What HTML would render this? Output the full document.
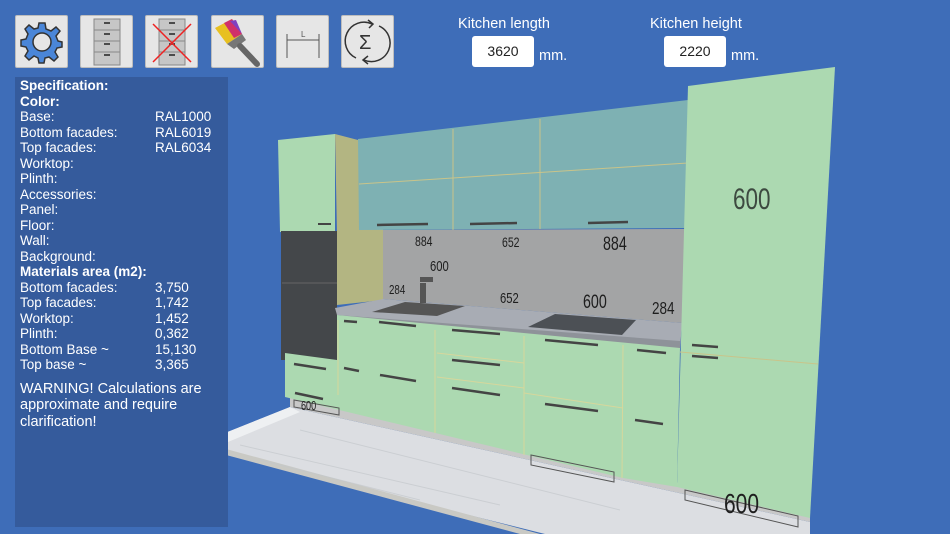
<!DOCTYPE html>
<html><head><meta charset="utf-8"><style>
body{margin:0;width:950px;height:534px;overflow:hidden;background:#3e6db8;font-family:"Liberation Sans",sans-serif;position:relative}
.btn{position:absolute;top:15px;width:53px;height:53px;background:#e6e6e6;border:1px solid #bdbdbd;border-radius:2px;box-sizing:border-box}
.panel{position:absolute;left:15px;top:77px;width:213px;height:450px;background:#355b9c;color:#fff;font-size:13.5px;line-height:15.5px;padding:1px 5px;box-sizing:border-box}
.r{display:flex}.r span:first-child{width:135px}
b{font-weight:bold}
.lbl{position:absolute;color:#fff;font-size:14.5px}
.inp{position:absolute;top:36px;width:62px;height:31px;background:#fff;border-radius:3px;font-size:14px;text-align:center;line-height:31px;color:#222}
</style></head><body>
<svg width="950" height="534" style="position:absolute;left:0;top:0">
<polygon points="215,437 290,407 810,522 810,534 545,534 215,452" fill="#dcdee2"/>
<polygon points="215,437 290,407 300,412 228,442" fill="#eef0f2"/>
<polygon points="215,446 540,534 520,534 215,452" fill="#c9c9c4"/>
<polygon points="290,397 810,512 810,522 290,407" fill="#c8c8c8"/>
<g stroke="#c4c8cc" stroke-width="1" opacity="0.7"><line x1="240" y1="445" x2="500" y2="505"/><line x1="300" y1="430" x2="620" y2="510"/><line x1="260" y1="460" x2="420" y2="500"/></g>
<polygon points="278,140 335,134 335,232 280,232" fill="#acd9b1"/>
<polygon points="335,134 358,140 383,230 383,300 337,305 337,232" fill="#b3b582"/>
<rect x="281" y="231" width="56" height="129" fill="#44474a"/>
<line x1="282" y1="283" x2="337" y2="283" stroke="#666" />
<line x1="318" y1="224" x2="331" y2="224" stroke="#444" stroke-width="2"/>
<polygon points="358,139 688,100 685,228 359,230" fill="#7eb1b3"/>
<polyline points="359,184 688,163" stroke="#c9c48a" fill="none"/>
<line x1="453" y1="129" x2="453" y2="230" stroke="#c9c48a"/>
<line x1="540" y1="119" x2="540" y2="229" stroke="#c9c48a"/>
<g stroke="#444" stroke-width="2.5"><line x1="377" y1="225" x2="428" y2="224"/><line x1="470" y1="224" x2="517" y2="223"/><line x1="588" y1="223" x2="628" y2="222"/></g>
<polygon points="383,230 685,229 682,323 383,299" fill="#a3a4a5"/>
<polygon points="335,308 383,299 682,323 680,349 337,315" fill="#a8acb4"/>
<polygon points="337,315 680,341 680,349 337,320" fill="#8e9299"/>
<polygon points="372,312 405,302 465,306 437,316" fill="#555"/>
<polygon points="528,327 555,314 636,320 622,335" fill="#4c5055"/>
<rect x="420" y="283" width="6" height="20" fill="#555"/><rect x="420" y="277" width="13" height="5" fill="#555"/>
<polygon points="337,315 680,348 677,487 623,478 285,397 285,353 337,360" fill="#acd9b1"/>
<g stroke="#d6d79c" stroke-width="1"><line x1="435" y1="330" x2="435" y2="433"/><line x1="524" y1="336" x2="524" y2="455"/><line x1="623" y1="345" x2="622" y2="478"/><line x1="338" y1="320" x2="338" y2="395"/><line x1="437" y1="353" x2="524" y2="363"/><line x1="437" y1="377" x2="524" y2="388"/><line x1="524" y1="393" x2="623" y2="408"/></g>
<g stroke="#444" stroke-width="2.5">
<line x1="344" y1="321" x2="357" y2="322"/><line x1="379" y1="322" x2="416" y2="326"/><line x1="452" y1="330" x2="500" y2="334"/><line x1="545" y1="340" x2="598" y2="345"/><line x1="637" y1="350" x2="666" y2="353"/>
<line x1="295" y1="393" x2="323" y2="399"/><line x1="344" y1="368" x2="359" y2="371"/><line x1="380" y1="375" x2="416" y2="381"/><line x1="452" y1="360" x2="500" y2="365"/><line x1="452" y1="388" x2="500" y2="395"/><line x1="545" y1="404" x2="598" y2="411"/><line x1="635" y1="420" x2="663" y2="424"/><line x1="294" y1="364" x2="326" y2="369"/>
</g>
<g fill="none" stroke="#555"><polygon points="294,400 339,408 339,415 294,407"/><polygon points="531,455 614,472 614,482 531,465"/><polygon points="685,490 798,516 798,527 685,500"/></g>
<polygon points="688,86 835,67 810,518 677,487" fill="#acd9b1"/>
<line x1="680" y1="352" x2="818" y2="364" stroke="#c9c48a"/>
<g stroke="#444" stroke-width="2.5"><line x1="692" y1="345" x2="718" y2="347"/><line x1="692" y1="356" x2="718" y2="358"/></g>
<g font-family="Liberation Sans" fill="#1e1e1e">
<text transform="translate(733,209) scale(0.75,1)" font-size="30" fill="#3d4a40">600</text>
<text transform="translate(415,246) scale(0.75,1)" font-size="14">884</text>
<text transform="translate(502,247) scale(0.75,1)" font-size="14">652</text>
<text transform="translate(603,250) scale(0.75,1)" font-size="19">884</text>
<text transform="translate(430,271) scale(0.75,1)" font-size="15">600</text>
<text transform="translate(389,294) scale(0.75,1)" font-size="13">284</text>
<text transform="translate(500,303) scale(0.75,1)" font-size="15">652</text>
<text transform="translate(583,308) scale(0.75,1)" font-size="19">600</text>
<text transform="translate(652,314) scale(0.75,1)" font-size="18">284</text>
<text transform="translate(301,410) scale(0.7,1)" font-size="13">600</text>
<text transform="translate(724,513) scale(0.75,1)" font-size="28">600</text>
</g>
</svg>
<div class="btn" style="left:15px"><svg width="51" height="51" viewBox="0 0 51 51"><g transform="translate(26,26)" fill="#4a86d8" stroke="#333" stroke-width="1.5"><path d="M-3,-19 L3,-19 L4,-13 L9,-11 L14,-15 L18,-11 L14,-6 L16,-1 L20,0 L20,5 L15,6 L13,10 L16,15 L12,19 L7,15 L3,16 L2,21 L-3,21 L-4,16 L-8,14 L-13,18 L-17,14 L-14,9 L-16,5 L-21,4 L-21,-2 L-16,-3 L-14,-8 L-17,-13 L-13,-17 L-8,-13 L-4,-14 Z"/><circle r="9" fill="#e6e6e6"/></g></svg></div>
<div class="btn" style="left:80px"><svg width="51" height="51"><rect x="13" y="3" width="26" height="46" fill="#c6c6c6" stroke="#888"/><g stroke="#888"><line x1="13" y1="14" x2="39" y2="14"/><line x1="13" y1="25" x2="39" y2="25"/><line x1="13" y1="36" x2="39" y2="36"/></g><g stroke="#222" stroke-width="1.5"><line x1="23" y1="7" x2="29" y2="7"/><line x1="23" y1="18" x2="29" y2="18"/><line x1="23" y1="28" x2="29" y2="28"/><line x1="23" y1="39" x2="29" y2="39"/></g></svg></div>
<div class="btn" style="left:145px"><svg width="51" height="51"><rect x="13" y="3" width="26" height="46" fill="#c6c6c6" stroke="#888"/><g stroke="#888"><line x1="13" y1="14" x2="39" y2="14"/><line x1="13" y1="25" x2="39" y2="25"/><line x1="13" y1="36" x2="39" y2="36"/></g><g stroke="#222" stroke-width="1.5"><line x1="23" y1="7" x2="29" y2="7"/><line x1="23" y1="18" x2="29" y2="18"/><line x1="23" y1="28" x2="29" y2="28"/><line x1="23" y1="39" x2="29" y2="39"/></g><g stroke="#e22" stroke-width="1.5"><line x1="7" y1="8" x2="45" y2="46"/><line x1="45" y1="8" x2="7" y2="46"/></g></svg></div>
<div class="btn" style="left:211px"><svg width="51" height="51"><polygon points="3,12 20,3 30,18 15,28" fill="#e8c020"/><polygon points="12,7 20,3 30,18 22,22" fill="#d0306a"/><polygon points="18,5 24,4 30,18" fill="#8040c0"/><polygon points="15,28 30,18 34,24 22,33" fill="#777"/><line x1="28" y1="30" x2="45" y2="48" stroke="#666" stroke-width="6" stroke-linecap="round"/></svg></div>
<div class="btn" style="left:276px"><svg width="51" height="51" stroke="#555"><line x1="10" y1="18" x2="10" y2="42"/><line x1="42" y1="18" x2="42" y2="42"/><line x1="10" y1="24" x2="42" y2="24"/><text x="24" y="21" font-size="8" fill="#555" stroke="none" font-family="Liberation Sans">L</text></svg></div>
<div class="btn" style="left:341px"><svg width="51" height="51" fill="none" stroke="#333" stroke-width="1.5"><path d="M14,42 A18,18 0 0 1 30,8"/><path d="M37,10 A18,18 0 0 1 22,44"/><path d="M26,4 L31,8 L27,12"/><path d="M26,40 L21,44 L26,48"/><text x="17" y="33" font-size="20" fill="#333" stroke="none" font-family="Liberation Sans">Σ</text></svg></div>
<div class="lbl" style="left:458px;top:16px">Kitchen length</div>
<div class="lbl" style="left:650px;top:16px">Kitchen height</div>
<div class="inp" style="left:472px">3620</div><div class="lbl" style="left:539px;top:48px">mm.</div>
<div class="inp" style="left:664px">2220</div><div class="lbl" style="left:731px;top:48px">mm.</div>
<div class="panel">
<b>Specification:</b><br><b>Color:</b>
<div class="r"><span>Base:</span><span>RAL1000</span></div>
<div class="r"><span>Bottom facades:</span><span>RAL6019</span></div>
<div class="r"><span>Top facades:</span><span>RAL6034</span></div>
Worktop:<br>Plinth:<br>Accessories:<br>Panel:<br>Floor:<br>Wall:<br>Background:<br>
<b>Materials area (m2):</b>
<div class="r"><span>Bottom facades:</span><span>3,750</span></div>
<div class="r"><span>Top facades:</span><span>1,742</span></div>
<div class="r"><span>Worktop:</span><span>1,452</span></div>
<div class="r"><span>Plinth:</span><span>0,362</span></div>
<div class="r"><span>Bottom Base ~</span><span>15,130</span></div>
<div class="r"><span>Top base ~</span><span>3,365</span></div>
<div style="margin-top:8px;font-size:14.5px;line-height:16.5px">WARNING! Calculations are approximate and require clarification!</div>
</div>
</body></html>
